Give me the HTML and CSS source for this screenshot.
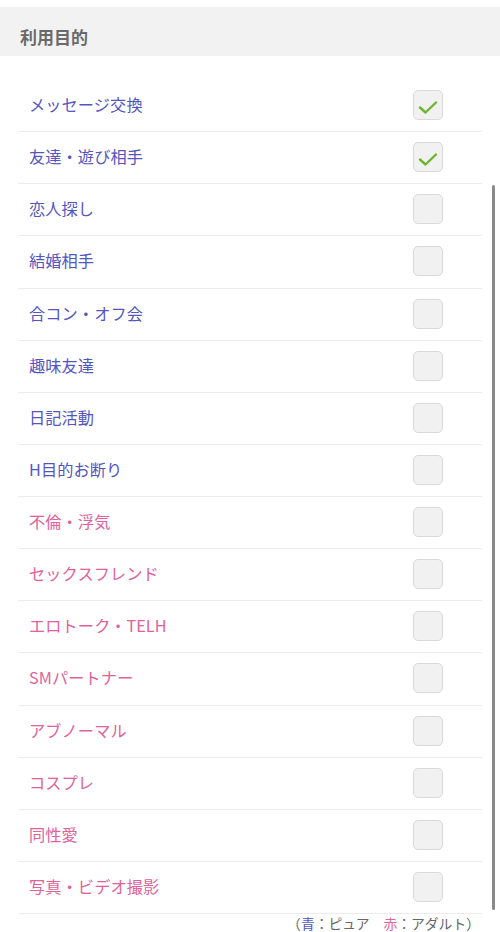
FILE: index.html
```html
<!DOCTYPE html>
<html lang="ja">
<head>
<meta charset="utf-8">
<link rel="stylesheet" href="styles.css">
</head>
<body>
<div class="page">
  <div class="topgap"></div>
  <div class="section-head"><h2 class="section-title">利用目的</h2></div>
  <ul class="purpose-list">
    <li class="row pure"><span class="label">メッセージ交換</span><span class="box checked"><svg viewBox="0 0 30 30" width="30" height="30"><path d="M7 17.5 L12.5 22.5 L23 12.5" fill="none" stroke="#6cb52d" stroke-width="2.4" stroke-linecap="round" stroke-linejoin="round"/></svg></span></li>
    <li class="row pure"><span class="label">友達・遊び相手</span><span class="box checked"><svg viewBox="0 0 30 30" width="30" height="30"><path d="M7 17.5 L12.5 22.5 L23 12.5" fill="none" stroke="#6cb52d" stroke-width="2.4" stroke-linecap="round" stroke-linejoin="round"/></svg></span></li>
    <li class="row pure"><span class="label">恋人探し</span><span class="box"></span></li>
    <li class="row pure"><span class="label">結婚相手</span><span class="box"></span></li>
    <li class="row pure"><span class="label">合コン・オフ会</span><span class="box"></span></li>
    <li class="row pure"><span class="label">趣味友達</span><span class="box"></span></li>
    <li class="row pure"><span class="label">日記活動</span><span class="box"></span></li>
    <li class="row pure"><span class="label">H目的お断り</span><span class="box"></span></li>
    <li class="row adult"><span class="label">不倫・浮気</span><span class="box"></span></li>
    <li class="row adult"><span class="label">セックスフレンド</span><span class="box"></span></li>
    <li class="row adult"><span class="label">エロトーク・TELH</span><span class="box"></span></li>
    <li class="row adult"><span class="label">SMパートナー</span><span class="box"></span></li>
    <li class="row adult"><span class="label">アブノーマル</span><span class="box"></span></li>
    <li class="row adult"><span class="label">コスプレ</span><span class="box"></span></li>
    <li class="row adult"><span class="label">同性愛</span><span class="box"></span></li>
    <li class="row adult"><span class="label">写真・ビデオ撮影</span><span class="box"></span></li>
  </ul>
  <p class="legend">（<span class="c-pure">青</span>：ピュア　<span class="c-adult">赤</span>：アダルト）</p>
  <div class="scrollbar"></div>
</div>
</body>
</html>
```
FILE: styles.css
```css
* { box-sizing: border-box; }
html, body { margin: 0; padding: 0; background: #fff; }
body {
  font-family: "Noto Sans CJK JP", "Noto Sans", sans-serif;
  width: 500px;
  height: 932px;
  overflow: hidden;
}
.page { position: relative; height: 932px; }
.topgap { height: 7px; }
.section-head {
  height: 49px;
  background: #f2f2f2;
  padding-left: 20px;
  display: flex;
  align-items: center;
}
.section-title {
  margin: 0;
  padding-top: 10px;
  font-size: 17px;
  font-weight: 700;
  color: #6a6a6a;
  line-height: 20px;
}
.purpose-list {
  list-style: none;
  margin: 24px 18px 0;
  padding: 0;
}
.row {
  height: 52.13px;
  border-bottom: 1px solid #ececec;
  display: flex;
  align-items: center;
  justify-content: space-between;
  padding: 0 39px 0 11px;
}
.label {
  font-size: 16.2px;
  line-height: 20px;
  letter-spacing: 0.1px;
  padding-bottom: 3px;
}
.pure .label { color: #5555c0; }
.adult .label { color: #e0629a; }
.box {
  width: 30px;
  height: 30px;
  border: 1px solid #d9d9d9;
  border-radius: 5px;
  background: #f1f1f1;
  display: block;
  position: relative;
  margin-top: -1px;
}
.box svg { position: absolute; left: -1px; top: -1px; }
.legend {
  margin: 0 20px 0 0;
  text-align: right;
  font-size: 13.8px;
  line-height: 18px;
  color: #666;
}
.c-pure { color: #5555c0; }
.c-adult { color: #e0629a; }
.scrollbar {
  position: absolute;
  left: 492px;
  top: 185px;
  width: 3px;
  height: 725px;
  border-radius: 2px;
  background: #8a8a8a;
}
```
